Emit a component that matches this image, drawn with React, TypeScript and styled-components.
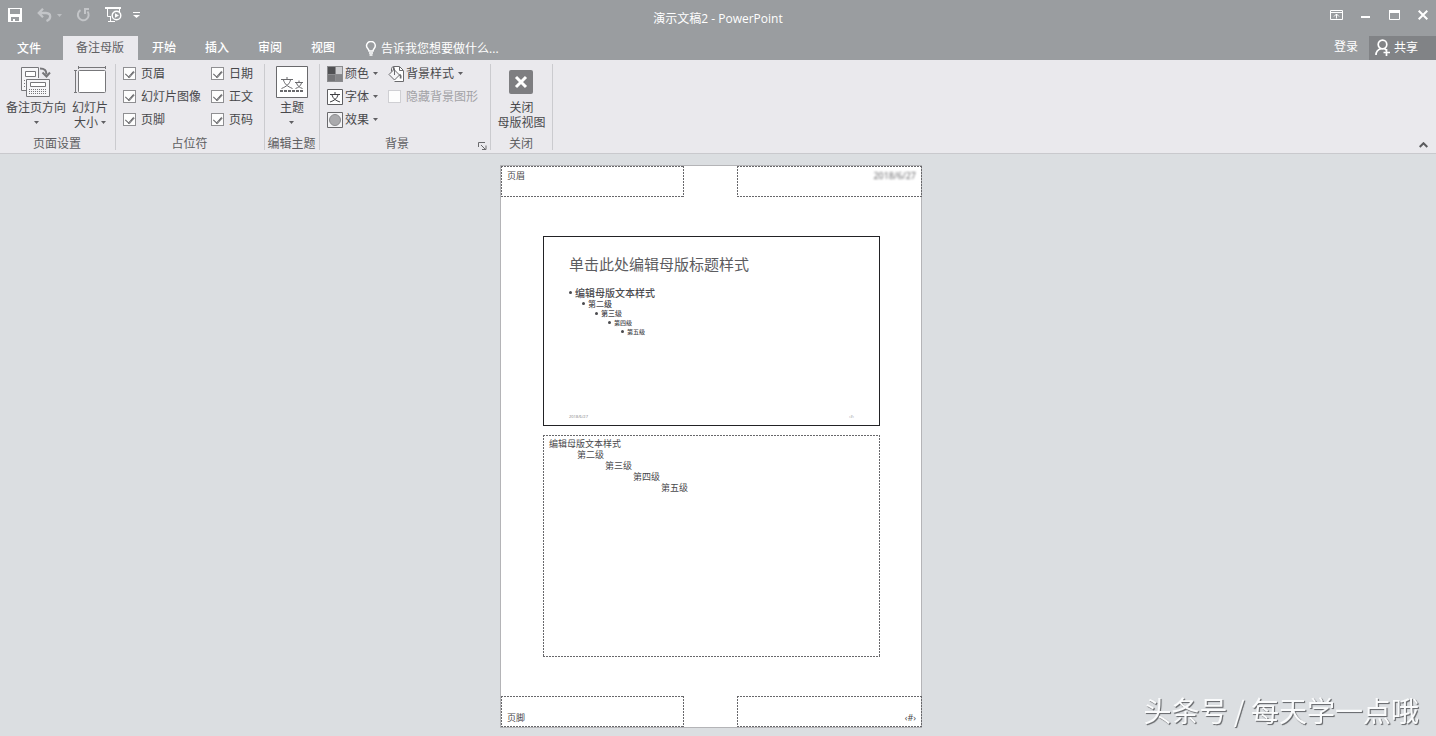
import React from "react";
import styled, { createGlobalStyle, css } from "styled-components";

const GlobalStyle = createGlobalStyle`
  *, *::before, *::after { box-sizing: border-box; }
  body {
    margin: 0;
    background: #dbdee1;
    font: 12px/15px "Open Sans", "Noto Sans CJK SC", sans-serif;
    color: #48484b;
  }
  button, input { font: inherit; color: inherit; margin: 0; padding: 0; }
  button { border: 0; background: none; white-space: nowrap; }
  a { color: inherit; text-decoration: none; }
  ul { list-style: none; margin: 0; padding: 0; }
  svg { display: block; flex: none; }
`;

const Window = styled.div`
  min-height: 100vh;
  display: flex;
  flex-direction: column;
`;

const TitleBar = styled.header`
  display: grid;
  grid-template-columns: 1fr auto 1fr;
  height: 36px;
  padding: 0 8px 0 8px;
  background: #9a9da0;
  color: #fff;
`;

const QuickAccess = styled.div`
  display: flex;
  align-items: center;
  height: 30px;
`;

const IconButton = styled.button<{ $dim?: boolean; $gap?: number }>`
  display: flex;
  align-items: center;
  gap: 4px;
  margin-right: ${(p) => p.$gap ?? 0}px;
  color: ${(p) => (p.$dim ? "#c3c5c8" : "#fff")};
`;

const DocumentTitle = styled.h1`
  margin: 0;
  font-size: 12px;
  line-height: 38px;
  font-weight: 400;
`;

const WindowControls = styled.div`
  display: flex;
  align-items: center;
  justify-content: flex-end;
  gap: 18px;
  height: 30px;
`;

const TabBar = styled.nav`
  display: flex;
  align-items: stretch;
  height: 24px;
  background: #9a9da0;
  color: #fff;
`;

const Tab = styled.button<{ $active?: boolean }>`
  padding: 0 15px 2px 14px;
  color: #fff;
  font-weight: 500;
  ${(p) =>
    p.$active &&
    css`
      padding: 0 14px 2px 13px;
      background: #eae9ed;
      color: #606063;
      font-weight: 400;
    `}
  &:first-child {
    padding: 0 22px 0 17px;
  }
`;

const TellMe = styled.button`
  display: flex;
  align-items: center;
  gap: 4px;
  margin-left: 15px;
  color: #fff;
`;

const Account = styled.div`
  display: flex;
  margin-left: auto;
  gap: 11px;
`;

const SignIn = styled.a`
  line-height: 22px;
`;

const Share = styled.button`
  display: flex;
  align-items: center;
  gap: 3px;
  padding: 0 18px 2px 6px;
  background: #818386;
  color: #fff;
`;

const Ribbon = styled.div`
  display: flex;
  height: 94px;
  background: #eae9ed;
  border-bottom: 1px solid #c9c9cd;
`;

const Group = styled.section<{ $width: number }>`
  display: flex;
  flex-direction: column;
  width: ${(p) => p.$width}px;
  padding-top: 2px;
  position: relative;
  &::after {
    content: "";
    position: absolute;
    top: 4px;
    right: 0;
    bottom: 3px;
    width: 1px;
    background: #cbcbcf;
  }
`;

const GroupBody = styled.div<{ $center?: boolean }>`
  display: flex;
  height: 74px;
  gap: 6px;
  padding: 0 7px 0 6px;
  justify-content: ${(p) => (p.$center ? "center" : "flex-start")};
`;

const GroupFooter = styled.div`
  display: flex;
  align-items: center;
  height: 16px;
  padding-right: 2px;
  color: #5e5e61;
`;

const GroupName = styled.h2`
  flex: 1;
  margin: 0;
  font-size: 12px;
  line-height: 16px;
  font-weight: 400;
  text-align: center;
`;

const Launcher = styled.button`
  padding: 2px 2px 0 4px;
`;

const LargeButton = styled.button`
  display: flex;
  flex-direction: column;
  align-items: center;
  justify-content: flex-start;
  padding-top: 4px;
  gap: 2px;
`;

const LargeLabel = styled.span`
  display: flex;
  flex-direction: column;
  align-items: center;
`;

const CaretLine = styled.span`
  display: flex;
  align-items: center;
  justify-content: center;
  gap: 3px;
  height: 15px;
`;

const CheckGrid = styled.div`
  display: grid;
  grid-template-columns: 88px auto;
  grid-auto-rows: 23px;
  padding-left: 1px;
`;

const CheckLabel = styled.label<{ $disabled?: boolean }>`
  display: flex;
  align-items: center;
  gap: 5px;
  height: 23px;
  white-space: nowrap;
  color: ${(p) => (p.$disabled ? "#a2a2a6" : "inherit")};
`;

const CheckBox = styled.input`
  appearance: none;
  display: flex;
  justify-content: center;
  width: 13px;
  height: 13px;
  background: #fdfdfd;
  border: 1px solid #8f8f92;
  &:disabled {
    border-color: #cfcfd3;
  }
  &:checked::after {
    content: "";
    width: 5px;
    height: 8px;
    margin-top: 1px;
    border: solid #646467;
    border-width: 0 1px 1px 0;
    box-shadow: 1px 0 0 #8a8a8d;
    transform: rotate(42deg);
  }
`;

const Column = styled.div`
  display: flex;
  flex-direction: column;
  padding-left: 1px;
  & + & {
    padding-left: 4px;
  }
`;

const SmallButton = styled.button`
  display: flex;
  align-items: center;
  gap: 2px;
  height: 23px;
  & > svg:last-child {
    margin-left: 2px;
  }
`;

const Collapse = styled.button`
  align-self: flex-end;
  margin-left: auto;
  padding: 0 8px 5px;
`;

const Workspace = styled.main`
  flex: 1;
  display: flex;
  justify-content: center;
  align-items: flex-start;
  padding: 11px 14px 8px 0;
`;

const Page = styled.article`
  width: 422px;
  background: #fff;
  border: 1px solid #b4b4b7;
`;

const dash = "#68686b 0 2px, transparent 2px 3px";

const Placeholder = styled.div<{ $end?: boolean; $bottom?: boolean }>`
  display: flex;
  justify-content: ${(p) => (p.$end ? "flex-end" : "flex-start")};
  align-items: ${(p) => (p.$bottom ? "flex-end" : "flex-start")};
  padding: 4px 6px;
  font-size: 9px;
  line-height: 11px;
  background:
    repeating-linear-gradient(90deg, ${dash}) top / 100% 1px no-repeat,
    repeating-linear-gradient(90deg, ${dash}) bottom / 100% 1px no-repeat,
    repeating-linear-gradient(${dash}) left / 1px 100% no-repeat,
    repeating-linear-gradient(${dash}) right / 1px 100% no-repeat;
`;

const Edge = styled.div`
  display: grid;
  grid-template-columns: 183px 185px;
  justify-content: space-between;
  height: 31px;
  margin-right: -1px;
  & > ${Placeholder} {
    height: 31px;
  }
`;

const Pixelated = styled.time`
  color: #5c5c5f;
  filter: blur(1px);
`;

const Slide = styled.div`
  display: flex;
  flex-direction: column;
  height: 190px;
  margin: 39px 41px 9px 42px;
  padding: 17px 25px 5px;
  border: 1px solid #222225;
`;

const SlideTitle = styled.h3`
  margin: 0 0 12px;
  font-size: 15px;
  line-height: 21px;
  font-weight: 400;
  color: #5c5c60;
`;

const levelSizes = [10, 8, 7, 6, 6];

const Outline = styled.ul`
  color: #4a4a4e;
`;

const OutlineItem = styled.li<{ $level: number }>`
  display: flex;
  align-items: center;
  gap: 3px;
  height: ${(p) => (p.$level < 2 ? 11 : 9)}px;
  padding-left: ${(p) => p.$level * 13}px;
  font-size: ${(p) => levelSizes[p.$level]}px;
  line-height: 10px;
  font-weight: 500;
  &::before {
    content: "";
    width: 3px;
    height: 3px;
    border-radius: 50%;
    background: #4a4a4e;
  }
`;

const SlideFooter = styled.div`
  display: flex;
  justify-content: space-between;
  margin-top: auto;
  font-size: 4px;
  line-height: 6px;
  color: #7c7c80;
`;

const Notes = styled(Placeholder)`
  height: 222px;
  margin: 0 41px 39px 42px;
  padding-top: 3px;
`;

const NotesItem = styled.li<{ $level: number }>`
  padding-left: ${(p) => p.$level * 28}px;
`;

const Watermark = styled.p`
  position: fixed;
  right: 17px;
  bottom: 6px;
  margin: 0;
  font: 28px/40px "Noto Sans CJK SC", sans-serif;
  color: #fafbfc;
  text-shadow: 1px 1px 1px #6a6c6f, 1px 1px 0 #909295;
`;

const Caret = () => (
  <svg width="5" height="3" viewBox="0 0 5 3" fill="currentColor" opacity=".85">
    <path d="M0 0h5L2.500 3z" />
  </svg>
);

const SaveIcon = () => (
  <svg width="14" height="14" viewBox="0 0 14 14">
    <path fill="currentColor" fillRule="evenodd" d="M0 0h14v14H0zM2 1v5h10V1zM3 9v4h2v-2h2v2h4V9z" />
  </svg>
);

const UndoIcon = () => (
  <svg width="16" height="14" viewBox="0 0 16 14" fill="none" stroke="currentColor" strokeWidth="2">
    <path d="M6 .8 1.800 5 6 9.200M2.500 5H9c5.500.3 5.500 6 .5 8" strokeWidth="2.300" />
  </svg>
);

const RedoIcon = () => (
  <svg width="15" height="14" viewBox="0 0 15 14" fill="none" stroke="currentColor" strokeWidth="2">
    <path d="M4.500 2.200A5.400 5.400 0 1 0 11.500 3.500" />
    <path d="M8 1h5M9 1v5" />
  </svg>
);

const SlideShowIcon = () => (
  <svg width="17" height="16" viewBox="0 0 17 16" fill="none" stroke="currentColor">
    <path d="M0 1h16" strokeWidth="2" />
    <path d="M2.500 2v7.500H6M14.500 2v3M5.500 10v4M3 14.500h7" />
    <circle cx="11.500" cy="8.500" r="4.300" strokeWidth="1.400" />
    <path d="m10 6.300 4 2.200-4 2.200z" fill="currentColor" stroke="none" />
  </svg>
);

const CustomizeIcon = () => (
  <svg width="7" height="6" viewBox="0 0 7 6" fill="currentColor">
    <path d="M0 0h7v1H0zM0 3h7L3.500 6z" />
  </svg>
);

const RibbonToggleIcon = () => (
  <svg width="13" height="10" viewBox="0 0 13 10" fill="none" stroke="currentColor">
    <path d="M.5.500h12v9H.5zM1 2.500h11M6.500 8.500V4M4 6.500l2.500-2.500L9 6.500" />
  </svg>
);

const MinimizeIcon = () => (
  <svg width="10" height="10" viewBox="0 0 10 10">
    <path d="M0 6h9v2H0z" fill="currentColor" />
  </svg>
);

const MaximizeIcon = () => (
  <svg width="11" height="10" viewBox="0 0 11 10" fill="none" stroke="currentColor">
    <path d="M.5.500h10v9H.5z" />
    <path d="M0 1.500h11" strokeWidth="3" />
  </svg>
);

const CloseIcon = () => (
  <svg width="10" height="10" viewBox="0 0 10 10" fill="none" stroke="currentColor" strokeWidth="2">
    <path d="m.7.700 8.600 8.600M9.300.700.700 9.300" />
  </svg>
);

const BulbIcon = () => (
  <svg width="12" height="15" viewBox="0 0 12 15" fill="none" stroke="currentColor" strokeWidth="1.500">
    <path d="M4 10C4 8 1.500 7.500 1.500 4.800a4.300 4.300 0 0 1 8.800 0C10.300 7.500 8 8 8 10zM4 12h4M4.500 14h3" />
  </svg>
);

const PersonIcon = () => (
  <svg width="16" height="17" viewBox="0 0 16 17" fill="none" stroke="currentColor" strokeWidth="1.700">
    <circle cx="7.500" cy="5.500" r="4.300" />
    <path d="M1 16c0-4 2-5.500 5-6.500M9.500 9.500l1.500 1.500M11.500 10v7M8.500 13.500H15" />
  </svg>
);

const OrientationIcon = () => (
  <svg width="32" height="32" viewBox="0 0 32 32" fill="none" stroke="#77777a">
    <path d="M6.500 24.500H1.500V1.500h17V12" fill="#f6f6f8" />
    <path d="M5.500 5.500h10v5h-10z" fill="#fff" />
    <path d="M4 14.500h3M4 17.500h2M4 20.500h2" strokeDasharray="1 1" />
    <path d="M6.500 13.500h23v17h-23z" fill="#f6f6f8" />
    <path d="M10.500 16.500h15v4h-15z" fill="#fff" />
    <path d="M9 23.500h18M9 25.500h18M9 27.500h18" strokeDasharray="1 1" />
    <path d="M20 2.500c5 0 6.500 2 6.500 6" strokeWidth="2.200" />
    <path d="m22.500 6.500 4 4 3.500-4" strokeWidth="2" />
  </svg>
);

const SlideSizeIcon = () => (
  <svg width="32" height="32" viewBox="0 0 32 32" fill="none" stroke="#77777a">
    <rect x="4.500" y="4.500" width="27" height="22" rx="1" fill="#fff" />
    <path d="M4 1.500h28M4.500 0v3M31.500 0v3M1.500 4v23M0 4.500h3M0 26.500h3" />
  </svg>
);

const ThemeIcon = () => (
  <svg width="32" height="32" viewBox="0 0 32 32" fill="none" stroke="#69696c">
    <path d="M.5.500h31v31H.5z" fill="#fff" />
    <path d="M5 13.500h12M11 11v2.500M7.500 14c1 4 4 6.500 9 8.500M14.500 14c-1 4-4 6.500-9 8.500M19 16.500h8M23 14.500v2M20.500 17c1 3 3 4.500 6 5.500M25.500 17c-1 3-3 4.500-6 5.500" />
    <path d="M4 25h23" strokeWidth="2" strokeDasharray="3 1" />
  </svg>
);

const ColorsIcon = () => (
  <svg width="16" height="16" viewBox="0 0 16 16">
    <path fill="#8b8b8e" d="M0 0h16v16H0z" />
    <path fill="#505053" d="M1 1h7v7H1z" />
    <path fill="#cfcfd2" d="M9 1h6v7H9z" />
    <path fill="#747477" d="M1 9h7v6H1z" />
    <path fill="#858588" d="M9 9h6v6H9z" />
  </svg>
);

const FontsIcon = () => (
  <svg width="16" height="16" viewBox="0 0 16 16" fill="none" stroke="#5f5f62">
    <path d="M.5.500h15v15H.5z" fill="#fff" />
    <path d="M3 5.500h10M8 3v2.500M5 6c1 3.500 3.500 5.500 8 7M11 6c-1 3.500-3.500 5.500-8 7" stroke="#3e3e41" />
  </svg>
);

const EffectsIcon = () => (
  <svg width="16" height="16" viewBox="0 0 16 16" stroke="#6a6a6d">
    <path d="M.5.500h15v15H.5z" fill="#f4f4f6" />
    <circle cx="8" cy="8" r="5.500" fill="#aaaaad" stroke="#8b8b8e" />
  </svg>
);

const StylesIcon = () => (
  <svg width="16" height="16" viewBox="0 0 16 16" fill="none" stroke="#6a6a6d">
    <path d="M5.500 4V.5h6l4 4v11h-9" fill="#fff" />
    <path d="M11.500 1v3.500H15" />
    <path d="m6 3.500 5.500 5.500-5 5L1 8.500z" fill="#f6f6f8" />
    <path d="M6.500 9V2.500c0-2-3-2-3 0v3" />
    <path d="M11.500 8.500c1.500 1 1.500 2.500 1 4" strokeWidth="1.600" />
  </svg>
);

const CloseMasterIcon = () => (
  <svg width="24" height="32" viewBox="0 0 24 32">
    <rect y="4" width="24" height="24" rx="2" fill="#7e7e81" />
    <path d="m7 11 10 10M17 11 7 21" stroke="#fff" strokeWidth="3" />
  </svg>
);

const LauncherIcon = () => (
  <svg width="9" height="9" viewBox="0 0 9 9" fill="none" stroke="#6a6a6d">
    <path d="M.5 6V1.500H7M3 4l4.500 4.500M8 4.500V8.500H4" />
  </svg>
);

const ChevronUp = () => (
  <svg width="9" height="6" viewBox="0 0 9 6" fill="none" stroke="#5b5b5e" strokeWidth="2">
    <path d="m.7 5 3.800-3.800L8.300 5" />
  </svg>
);

const checks = ["页眉", "日期", "幻灯片图像", "正文", "页脚", "页码"];
const levels = ["编辑母版文本样式", "第二级", "第三级", "第四级", "第五级"];

export default function App() {
  return (
    <Window>
      <GlobalStyle />
      <TitleBar>
        <QuickAccess>
          <IconButton $gap={15} aria-label="保存"><SaveIcon /></IconButton>
          <IconButton $dim $gap={14} aria-label="撤消"><UndoIcon /><Caret /></IconButton>
          <IconButton $dim $gap={14} aria-label="重复"><RedoIcon /></IconButton>
          <IconButton $gap={11} aria-label="从头开始"><SlideShowIcon /></IconButton>
          <IconButton aria-label="自定义快速访问工具栏"><CustomizeIcon /></IconButton>
        </QuickAccess>
        <DocumentTitle>演示文稿2 - PowerPoint</DocumentTitle>
        <WindowControls>
          <IconButton aria-label="功能区显示选项"><RibbonToggleIcon /></IconButton>
          <IconButton aria-label="最小化"><MinimizeIcon /></IconButton>
          <IconButton aria-label="最大化"><MaximizeIcon /></IconButton>
          <IconButton aria-label="关闭"><CloseIcon /></IconButton>
        </WindowControls>
      </TitleBar>
      <TabBar>
        <Tab>文件</Tab>
        <Tab $active>备注母版</Tab>
        <Tab>开始</Tab>
        <Tab>插入</Tab>
        <Tab>审阅</Tab>
        <Tab>视图</Tab>
        <TellMe><BulbIcon />告诉我您想要做什么...</TellMe>
        <Account>
          <SignIn href="#">登录</SignIn>
          <Share><PersonIcon />共享</Share>
        </Account>
      </TabBar>
      <Ribbon>
        <Group $width={116}>
          <GroupBody>
            <LargeButton>
              <OrientationIcon />
              <LargeLabel>备注页方向<CaretLine><Caret /></CaretLine></LargeLabel>
            </LargeButton>
            <LargeButton>
              <SlideSizeIcon />
              <LargeLabel>幻灯片<CaretLine>大小<Caret /></CaretLine></LargeLabel>
            </LargeButton>
          </GroupBody>
          <GroupFooter><GroupName>页面设置</GroupName></GroupFooter>
        </Group>
        <Group $width={149}>
          <GroupBody>
            <CheckGrid>
              {checks.map((name) => (
                <CheckLabel key={name}>
                  <CheckBox type="checkbox" defaultChecked />
                  {name}
                </CheckLabel>
              ))}
            </CheckGrid>
          </GroupBody>
          <GroupFooter><GroupName>占位符</GroupName></GroupFooter>
        </Group>
        <Group $width={55}>
          <GroupBody $center>
            <LargeButton>
              <ThemeIcon />
              <LargeLabel>主题<CaretLine><Caret /></CaretLine></LargeLabel>
            </LargeButton>
          </GroupBody>
          <GroupFooter><GroupName>编辑主题</GroupName></GroupFooter>
        </Group>
        <Group $width={171}>
          <GroupBody>
            <Column>
              <SmallButton><ColorsIcon />颜色<Caret /></SmallButton>
              <SmallButton><FontsIcon />字体<Caret /></SmallButton>
              <SmallButton><EffectsIcon />效果<Caret /></SmallButton>
            </Column>
            <Column>
              <SmallButton><StylesIcon />背景样式<Caret /></SmallButton>
              <CheckLabel $disabled>
                <CheckBox type="checkbox" disabled />
                隐藏背景图形
              </CheckLabel>
            </Column>
          </GroupBody>
          <GroupFooter>
            <GroupName>背景</GroupName>
            <Launcher aria-label="背景设置"><LauncherIcon /></Launcher>
          </GroupFooter>
        </Group>
        <Group $width={62}>
          <GroupBody $center>
            <LargeButton>
              <CloseMasterIcon />
              <LargeLabel><span>关闭</span><span>母版视图</span></LargeLabel>
            </LargeButton>
          </GroupBody>
          <GroupFooter><GroupName>关闭</GroupName></GroupFooter>
        </Group>
        <Collapse aria-label="折叠功能区"><ChevronUp /></Collapse>
      </Ribbon>
      <Workspace>
        <Page>
          <Edge>
            <Placeholder>页眉</Placeholder>
            <Placeholder $end><Pixelated>2018/6/27</Pixelated></Placeholder>
          </Edge>
          <Slide>
            <SlideTitle>单击此处编辑母版标题样式</SlideTitle>
            <Outline>
              {levels.map((text, i) => (
                <OutlineItem key={text} $level={i}>{text}</OutlineItem>
              ))}
            </Outline>
            <SlideFooter><span>2018/6/27</span><span>‹#›</span></SlideFooter>
          </Slide>
          <Notes>
            <ul>
              {levels.map((text, i) => (
                <NotesItem key={text} $level={i}>{text}</NotesItem>
              ))}
            </ul>
          </Notes>
          <Edge>
            <Placeholder $bottom>页脚</Placeholder>
            <Placeholder $end $bottom>‹#›</Placeholder>
          </Edge>
        </Page>
      </Workspace>
      <Watermark>头条号 / 每天学一点哦</Watermark>
    </Window>
  );
}
